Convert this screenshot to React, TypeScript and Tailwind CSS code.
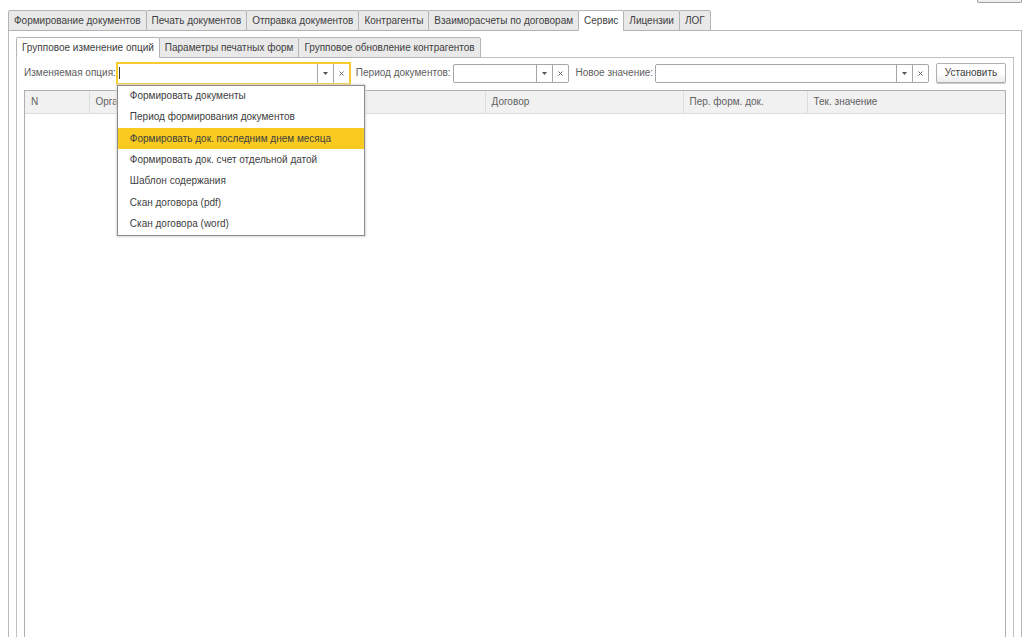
import React, { useState } from 'react';

const mainTabs = [
  'Формирование документов',
  'Печать документов',
  'Отправка документов',
  'Контрагенты',
  'Взаиморасчеты по договорам',
  'Сервис',
  'Лицензии',
  'ЛОГ',
];

const serviceTabs = [
  'Групповое изменение опций',
  'Параметры печатных форм',
  'Групповое обновление контрагентов',
];

const options = [
  'Формировать документы',
  'Период формирования документов',
  'Формировать док. последним днем месяца',
  'Формировать док. счет отдельной датой',
  'Шаблон содержания',
  'Скан договора (pdf)',
  'Скан договора (word)',
];

const columns = [
  { title: 'N', width: 'w-16' },
  { title: 'Орга', width: '' },
  { title: 'Договор', width: 'w-[198px]' },
  { title: 'Пер. форм. док.', width: 'w-[124px]' },
  { title: 'Тек. значение', width: 'w-[198px]' },
];

interface TabsProps {
  items: string[];
  active: string;
  onSelect: (item: string) => void;
}

const Tabs: React.FC<TabsProps> = ({ items, active, onSelect }) => (
  <div role="tablist" className="relative -mb-px flex">
    {items.map((item) => (
      <button
        key={item}
        role="tab"
        aria-selected={item === active}
        onClick={() => onSelect(item)}
        className={`-mr-px h-[21px] rounded-t-xs border border-[#b4b4b4] px-[5px] whitespace-nowrap ${
          item === active ? 'border-b-white bg-white' : 'bg-[#e9e9e9]'
        }`}
      >
        {item}
      </button>
    ))}
  </div>
);

interface ComboFieldProps {
  id: string;
  label: string;
  className: string;
  value: string;
  onChange: (value: string) => void;
  focused?: boolean;
  onToggle?: () => void;
  children?: React.ReactNode;
}

const ComboField: React.FC<ComboFieldProps> = ({
  id,
  label,
  className,
  value,
  onChange,
  focused,
  onToggle,
  children,
}) => (
  <>
    <label htmlFor={id} className="mr-0.5 whitespace-nowrap text-[#606060]">
      {label}
    </label>
    <div
      className={`relative mr-[7px] flex h-[19px] bg-white ${className} ${
        focused ? 'outline-2 outline-[#f5cb2e]' : 'rounded-xs border border-[#a6a6a6]'
      }`}
    >
      {focused && !value && <span className="absolute top-[3px] left-px h-3 w-px bg-[#404040]" />}
      <input
        id={id}
        type="text"
        value={value}
        onChange={(e) => onChange(e.target.value)}
        className="w-0 min-w-0 flex-1 px-[3px] outline-none"
      />
      <button
        aria-label="Выбрать"
        onClick={onToggle}
        className="flex w-4 items-center justify-center border-l border-[#a6a6a6]"
      >
        <svg viewBox="0 0 5 3" className="h-[3px] w-[5px]">
          <path d="M0 0h5L2.5 3z" fill="#555" />
        </svg>
      </button>
      <button
        aria-label="Очистить"
        onClick={() => onChange('')}
        className="flex w-4 items-center justify-center border-l border-[#a6a6a6]"
      >
        <svg viewBox="0 0 5 5" className="h-[5px] w-[5px]">
          <path d="M.5 .5l4 4M4.500 .5l-4 4" stroke="#666" strokeWidth="1" />
        </svg>
      </button>
      {children}
    </div>
  </>
);

const App: React.FC = () => {
  const [mainTab, setMainTab] = useState('Сервис');
  const [serviceTab, setServiceTab] = useState('Групповое изменение опций');
  const [option, setOption] = useState('');
  const [period, setPeriod] = useState('');
  const [newValue, setNewValue] = useState('');
  const [menuOpen, setMenuOpen] = useState(true);
  const [highlighted, setHighlighted] = useState(2);

  const pickOption = (item: string) => {
    setOption(item);
    setMenuOpen(false);
  };

  return (
    <div className="flex h-screen flex-col overflow-hidden bg-white pr-0.5 pb-[7px] pl-2 font-['Liberation_Sans',Arial,sans-serif] text-[10px] leading-3 text-[#404040]">
      {/* Bottom edge of the command bar */}
      <div className="flex h-[10px] shrink-0 items-start justify-end">
        <div className="h-[3px] w-[45px] rounded-b-xs border border-t-0 border-[#a0a0a0] bg-[#eeeeee]" />
      </div>

      <Tabs items={mainTabs} active={mainTab} onSelect={setMainTab} />

      <main className="flex flex-1 flex-col border border-b-0 border-[#b8b8b8] px-[7px] pt-[6px]">
        <Tabs items={serviceTabs} active={serviceTab} onSelect={setServiceTab} />

        <section className="flex flex-1 flex-col border border-b-0 border-[#c0c0c0] px-[7px] pt-[5px]">
          {/* Parameters */}
          <div className="relative z-10 flex h-5 items-center">
            <ComboField
              id="option"
              label="Изменяемая опция:"
              className="w-[231px]"
              value={option}
              onChange={setOption}
              onToggle={() => setMenuOpen(!menuOpen)}
              focused
            >
              {menuOpen && (
                <ul
                  role="listbox"
                  className="absolute top-[21px] -left-px flex h-[151px] w-[248px] flex-col border border-[#8c8c8c] bg-white shadow-[0_0_2px_1px_#d8d8d8]"
                >
                  {options.map((item, i) => (
                    <li
                      key={item}
                      role="option"
                      aria-selected={i === highlighted}
                      onMouseEnter={() => setHighlighted(i)}
                      onClick={() => pickOption(item)}
                      className={`flex flex-1 items-center px-3 whitespace-nowrap ${
                        i === highlighted ? 'bg-[#f9cb20]' : ''
                      }`}
                    >
                      {item}
                    </li>
                  ))}
                </ul>
              )}
            </ComboField>
            <ComboField
              id="period"
              label="Период документов:"
              className="w-[116px]"
              value={period}
              onChange={setPeriod}
            />
            <ComboField
              id="new-value"
              label="Новое значение:"
              className="flex-1"
              value={newValue}
              onChange={setNewValue}
            />
            <button className="h-5 w-[70px] rounded-xs border border-[#b0b0b0] bg-linear-to-b from-white from-50% to-[#ececec] shadow-[0_1px_0_#c8c8c8]">
              Установить
            </button>
          </div>

          {/* Contracts */}
          <div className="mt-[7px] flex-1 border border-b-0 border-[#b0b0b0]">
            <table className="w-full table-fixed border-collapse">
              <thead>
                <tr className="h-[22px] border-b border-[#dcdcdc] bg-[#f1f1f1] text-left text-[#606060]">
                  {columns.map((column) => (
                    <th
                      key={column.title}
                      className={`border-r border-[#dcdcdc] px-[6px] font-normal last:border-r-0 ${column.width}`}
                    >
                      {column.title}
                    </th>
                  ))}
                </tr>
              </thead>
              <tbody />
            </table>
          </div>
        </section>
      </main>
    </div>
  );
};

export default App;
